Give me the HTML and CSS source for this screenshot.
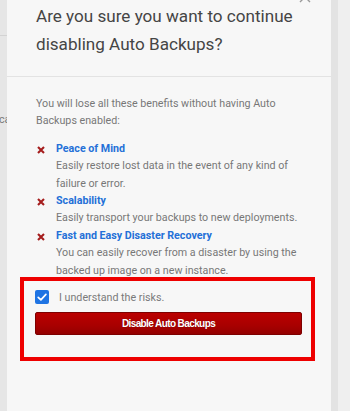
FILE: index.html
```html
<!DOCTYPE html>
<html lang="en">
<head>
<meta charset="utf-8">
<title>Disable Auto Backups</title>
<link rel="stylesheet" href="styles.css">
</head>
<body>
<div class="page">
  <div class="backdrop-left">
    <div class="bg-rule"></div>
    <div class="bg-text">ca</div>
  </div>
  <div class="modal">
    <button class="close" aria-label="Close">
      <svg width="12" height="12" viewBox="0 0 12 12"><path d="M1 1L11 11M11 1L1 11" stroke="#9a9a9a" stroke-width="1.4" fill="none"/></svg>
    </button>
    <div class="modal-header">
      <h2 class="title">Are you sure you want to continue disabling Auto Backups?</h2>
    </div>
    <div class="modal-body">
      <p class="intro">You will lose all these benefits without having Auto Backups enabled:</p>
      <ul class="benefits">
        <li class="benefit">
          <span class="mark"><svg width="8" height="8" viewBox="0 0 8 8"><path d="M1 1L7 7M7 1L1 7" stroke="#a51d1d" stroke-width="2.1" fill="none"/></svg></span>
          <div class="benefit-text">
            <div class="benefit-title">Peace of Mind</div>
            <div class="benefit-desc">Easily restore lost data in the event of any kind of failure or error.</div>
          </div>
        </li>
        <li class="benefit">
          <span class="mark"><svg width="8" height="8" viewBox="0 0 8 8"><path d="M1 1L7 7M7 1L1 7" stroke="#a51d1d" stroke-width="2.1" fill="none"/></svg></span>
          <div class="benefit-text">
            <div class="benefit-title">Scalability</div>
            <div class="benefit-desc">Easily transport your backups to new deployments.</div>
          </div>
        </li>
        <li class="benefit">
          <span class="mark"><svg width="8" height="8" viewBox="0 0 8 8"><path d="M1 1L7 7M7 1L1 7" stroke="#a51d1d" stroke-width="2.1" fill="none"/></svg></span>
          <div class="benefit-text">
            <div class="benefit-title">Fast and Easy Disaster Recovery</div>
            <div class="benefit-desc">You can easily recover from a disaster by using the backed up image on a new instance.</div>
          </div>
        </li>
      </ul>
      <div class="confirm-box">
        <label class="confirm-row">
          <span class="checkbox"><svg width="14" height="14" viewBox="0 0 14 14"><path d="M3.2 7.3L5.9 9.9L10.9 4.4" stroke="#fff" stroke-width="1.7" fill="none" stroke-linecap="round" stroke-linejoin="round"/></svg></span>
          <span class="confirm-label">I understand the risks.</span>
        </label>
        <button class="danger-btn">Disable Auto Backups</button>
      </div>
    </div>
  </div>
  <div class="backdrop-right-a"></div>
  <div class="backdrop-right-b"></div>
</div>
</body>
</html>
```

FILE: styles.css
```css
* { box-sizing: border-box; }
html, body { margin: 0; padding: 0; }
body {
  width: 350px;
  height: 411px;
  overflow: hidden;
  background: #e6e6e6;
  font-family: Roboto, "Noto Sans", "Liberation Sans", sans-serif;
}
.page {
  display: flex;
  height: 411px;
}
.backdrop-left {
  width: 7px;
  flex: none;
  background: #e6e6e6;
  position: relative;
  overflow: hidden;
}
.bg-rule {
  margin-top: 35px;
  height: 1px;
  background: #d3d3d3;
}
.bg-text {
  margin-top: 77px;
  margin-left: -1px;
  font-size: 10.7px;
  line-height: 14px;
  color: #7a7a7a;
  white-space: nowrap;
}
.modal {
  width: 324px;
  flex: none;
  background: #f7f7f7;
  position: relative;
}
.close {
  position: absolute;
  top: -9px;
  right: 20px;
  width: 12px;
  height: 12px;
  padding: 0;
  border: 0;
  background: none;
  display: block;
}
.close svg { display: block; }
.modal-header {
  padding: 2px 26px 18px 29px;
  border-bottom: 1px solid #e3e3e3;
}
.title {
  margin: 0;
  font-weight: 400;
  font-size: 17.1px;
  line-height: 28px;
  color: #454545;
}
.modal-body {
  padding: 18px 26px 0 29px;
  font-size: 10.7px;
  line-height: 17.4px;
  color: #777;
}
.intro { margin: 0 0 10px; }
.benefits {
  list-style: none;
  margin: 0;
  padding: 0;
}
.benefit {
  display: flex;
}
.mark {
  width: 20px;
  flex: none;
  height: 17.4px;
  display: flex;
  align-items: center;
  padding-left: 1px;
  padding-top: 2px;
}
.mark svg { display: block; }
.benefit-title {
  color: #2470d8;
  font-weight: 700;
}
.confirm-box {
  margin-left: -16px;
  margin-top: -2px;
  width: 295px;
  border: 4px solid #ee0000;
  padding: 9px 9px 22px 11px;
}
.confirm-row {
  display: flex;
  align-items: center;
  gap: 10px;
  height: 14px;
}
.checkbox {
  width: 14px;
  height: 14px;
  flex: none;
  border-radius: 2px;
  background: #1f74e3;
  display: block;
}
.checkbox svg { display: block; }
.confirm-label {
  color: #7a7a7a;
  padding-top: 1px;
}
.danger-btn {
  display: block;
  margin-top: 8px;
  width: 267px;
  height: 23px;
  border: 1px solid #7d0000;
  border-radius: 2px;
  background: linear-gradient(#bb0000, #a80000 60%, #940000);
  color: #fff;
  font-family: "Liberation Sans", Arial, sans-serif;
  font-weight: 700;
  font-size: 10px;
  letter-spacing: -0.6px;
  text-shadow: 0 0 1px rgba(0,0,0,0.3);
  padding: 0;
}
.backdrop-right-a {
  width: 7px;
  flex: none;
  background: #e3e3e3;
}
.backdrop-right-b {
  flex: 1;
  background: #efefef;
}
```
